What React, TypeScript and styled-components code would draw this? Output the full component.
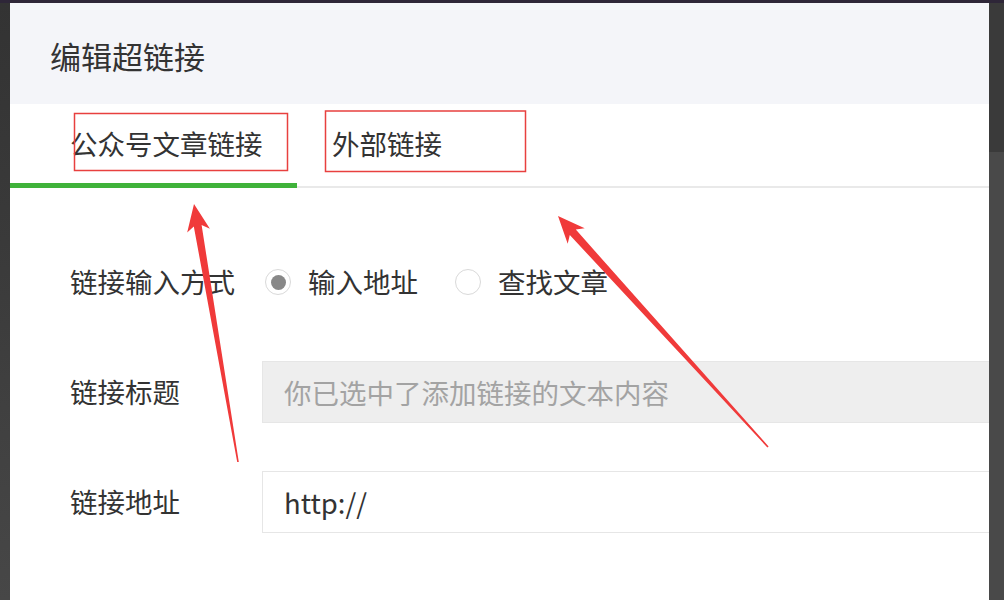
import React, { FC } from 'react'
import styled, { createGlobalStyle } from 'styled-components'

const GlobalStyle = createGlobalStyle`
  html, body {
    margin: 0;
    padding: 0;
    background: #3d3d3d;
    font-family: "Noto Sans CJK SC", "Microsoft YaHei", sans-serif;
  }
`

type Pt = [number, number]

// 截图工具风格的箭头：尾部细，头部三角
const arrowPoints = (tip: Pt, tail: Pt, headLen = 27, headHalf = 11.5, neck = 4, tailHalf = 0.8) => {
  const dx = tip[0] - tail[0]
  const dy = tip[1] - tail[1]
  const len = Math.hypot(dx, dy)
  const ux = dx / len
  const uy = dy / len
  const nx = -uy
  const ny = ux
  const at = (back: number, side: number): string =>
    `${(tip[0] - ux * back + nx * side).toFixed(1)},${(tip[1] - uy * back + ny * side).toFixed(1)}`
  return [
    at(0, 0),
    at(headLen, headHalf),
    at(headLen - 5, neck),
    `${(tail[0] + nx * tailHalf).toFixed(1)},${(tail[1] + ny * tailHalf).toFixed(1)}`,
    `${(tail[0] - nx * tailHalf).toFixed(1)},${(tail[1] - ny * tailHalf).toFixed(1)}`,
    at(headLen - 5, -neck),
    at(headLen, -headHalf),
  ].join(' ')
}

interface RadioProps {
  checked?: boolean
}

const App: FC = () => {
  return (
    <Page>
      <GlobalStyle />
      <TopStrip />
      <Body>
        <LeftEdge />
        <Dialog>
          <Header>
            <Title>编辑超链接</Title>
          </Header>
          <TabBar>
            <Tab active>公众号文章链接</Tab>
            <Tab>外部链接</Tab>
          </TabBar>
          <Form>
            <Row>
              <Label>链接输入方式</Label>
              <RadioGroup>
                <RadioItem>
                  <Radio checked />
                  <span>输入地址</span>
                </RadioItem>
                <RadioItem>
                  <Radio />
                  <span>查找文章</span>
                </RadioItem>
              </RadioGroup>
            </Row>
            <Row>
              <Label>链接标题</Label>
              <Input disabled placeholder="你已选中了添加链接的文本内容" />
            </Row>
            <Row>
              <Label>链接地址</Label>
              <Input defaultValue="http://" />
            </Row>
          </Form>
        </Dialog>
        <RightEdge />
      </Body>
      <Overlay width="1004" height="600" viewBox="0 0 1004 600">
        <rect x="74.5" y="113.5" width="213" height="57" fill="none" stroke="#e8403f" strokeWidth="1.5" />
        <rect x="325.5" y="111" width="200" height="60.5" fill="none" stroke="#e8403f" strokeWidth="1.5" />
        <polygon points={arrowPoints([194, 204], [238, 462])} fill="#f03a3a" />
        <polygon points={arrowPoints([558, 216], [768, 447])} fill="#f03a3a" />
      </Overlay>
    </Page>
  )
}

export default App

const Page = styled.div`
  position: relative;
  width: 1004px;
  height: 600px;
  overflow: hidden;
  display: flex;
  flex-direction: column;
  background: #3d3d3d;
`

const TopStrip = styled.div`
  height: 3px;
  background: #2e2638;
  flex-shrink: 0;
`

const Body = styled.div`
  flex: 1;
  display: flex;
  min-height: 0;
`

const LeftEdge = styled.div`
  width: 10px;
  flex-shrink: 0;
  background: linear-gradient(#333 0%, #3a3a3a 40%, #474747 100%);
`

const RightEdge = styled.div`
  width: 15px;
  flex-shrink: 0;
  background: linear-gradient(#3a3a3a 0%, #3a3a3a 25%, #494949 25%, #494949 100%);
`

const Dialog = styled.div`
  flex: 1;
  display: flex;
  flex-direction: column;
  background: #ffffff;
  overflow: hidden;
`

const Header = styled.div`
  height: 101px;
  flex-shrink: 0;
  display: flex;
  align-items: center;
  padding: 4px 0 0 40px;
  box-sizing: border-box;
  background: #f4f5f9;
`

const Title = styled.div`
  font-size: 31px;
  line-height: 1;
  color: #333;
`

const TabBar = styled.div`
  height: 84px;
  flex-shrink: 0;
  display: flex;
  box-sizing: border-box;
  border-bottom: 2px solid #e9e9e9;
`

const Tab = styled.div<{ active?: boolean }>`
  position: relative;
  display: flex;
  align-items: center;
  box-sizing: border-box;
  padding: 0 0 ${p => (p.active ? 0 : 2)}px ${p => (p.active ? 60 : 35)}px;
  width: ${p => (p.active ? '287px' : 'auto')};
  font-size: 27.5px;
  line-height: 1;
  color: #333;
  margin-bottom: ${p => (p.active ? '-2px' : '0')};
  border-bottom: ${p => (p.active ? '5px solid #3fb23a' : 'none')};
`

const Form = styled.div`
  display: flex;
  flex-direction: column;
  gap: 48px;
  padding: 63px 0 0 60px;
`

const Row = styled.div`
  display: flex;
  align-items: center;
  height: 62px;
`

const Label = styled.div`
  width: 192px;
  flex-shrink: 0;
  font-size: 27.5px;
  line-height: 1;
  color: #333;
`

const RadioGroup = styled.div`
  display: flex;
  align-items: center;
  gap: 37px;
  padding-left: 3px;
`

const RadioItem = styled.label`
  display: flex;
  align-items: center;
  gap: 17px;
  font-size: 27.5px;
  line-height: 1;
  color: #333;
`

const Radio = styled.span<RadioProps>`
  width: 26px;
  height: 26px;
  box-sizing: border-box;
  border-radius: 50%;
  border: 1.5px solid #d9d9d9;
  background: #fff;
  display: flex;
  align-items: center;
  justify-content: center;
  &::after {
    content: '';
    width: 15px;
    height: 15px;
    border-radius: 50%;
    background: ${p => (p.checked ? '#888888' : 'transparent')};
  }
`

const Input = styled.input`
  flex: 1;
  height: 62px;
  margin-right: -10px;
  box-sizing: border-box;
  padding: 0 21px;
  border: 1.5px solid #e6e6e6;
  background: #ffffff;
  font-family: "Noto Sans CJK SC", "Microsoft YaHei", sans-serif;
  font-size: 27.5px;
  color: #333;
  outline: none;
  &:disabled {
    background: #eeeeee;
  }
  &::placeholder {
    color: #a3a3a3;
  }
`

const Overlay = styled.svg`
  position: absolute;
  left: 0;
  top: 0;
  pointer-events: none;
`
